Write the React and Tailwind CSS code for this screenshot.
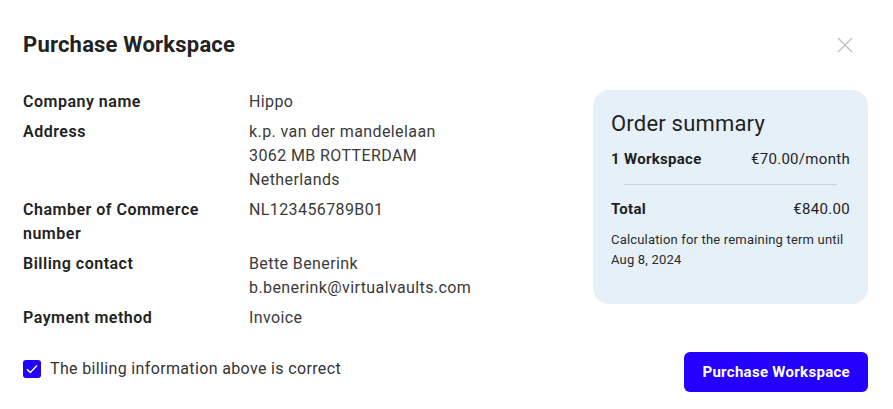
import { useState } from "react";

const rows = [
  { label: "Company name", value: ["Hippo"] },
  { label: "Address", value: ["k.p. van der mandelelaan", "3062 MB ROTTERDAM", "Netherlands"] },
  { label: "Chamber of Commerce number", value: ["NL123456789B01"] },
  { label: "Billing contact", value: ["Bette Benerink", "b.benerink@virtualvaults.com"] },
  { label: "Payment method", value: ["Invoice"] },
];

const OrderSummary = () => (
  <div className="w-[275px] shrink-0 rounded-2xl bg-[#e6f0f8] px-[18px] pt-5 pb-[34px] text-[#1f1f1f]">
    <h3 className="text-[22px] leading-7 font-normal tracking-[0.2px]">Order summary</h3>
    <div className="mt-2.5 flex items-center justify-between text-[15px] leading-[22px] tracking-[0.3px]">
      <span className="font-bold">1 Workspace</span>
      <span>€70.00/month</span>
    </div>
    <div className="mx-[13px] mt-[14px] h-px bg-[#c9d3dc]" />
    <div className="mt-[13px] flex items-center justify-between text-[15px] leading-[22px] tracking-[0.3px]">
      <span className="font-bold">Total</span>
      <span>€840.00</span>
    </div>
    <p className="mt-2.5 text-[13px] leading-5 tracking-[0.18px] text-[#2b2b2b]">
      Calculation for the remaining term until Aug 8, 2024
    </p>
  </div>
);

export default function App() {
  const [checked, setChecked] = useState(true);

  return (
    <div className="w-[893px] h-[409px] bg-white pl-[23px] pr-[25px] pt-[31px] font-['Roboto',sans-serif]">
      <div className="flex items-center justify-between">
        <h2 className="text-[22px] leading-7 font-bold tracking-[0.2px] text-[#222]">Purchase Workspace</h2>
        <button aria-label="Close" className="mr-[15px] text-[#c4c4c4]">
          <svg width="16" height="16" viewBox="0 0 16 16" fill="none" stroke="currentColor" strokeWidth="1.5">
            <path d="M1 1L15 15M15 1L1 15" />
          </svg>
        </button>
      </div>

      <div className="mt-[31px] flex items-start justify-between">
        <dl className="grid grid-cols-[200px_1fr] gap-x-[26px] gap-y-1.5 text-base leading-6">
          {rows.map((r) => (
            <div key={r.label} className="contents">
              <dt className="font-semibold tracking-[0.5px] text-[#222]">{r.label}</dt>
              <dd className="tracking-[0.4px] text-[#3a3a3a]">
                {r.value.map((v) => (
                  <div key={v}>{v}</div>
                ))}
              </dd>
            </div>
          ))}
        </dl>
        <OrderSummary />
      </div>

      <div className="mt-[22px] flex items-center justify-between">
        <label className="mb-[6px] flex items-center gap-[9px] text-base tracking-[0.35px] text-[#333] cursor-pointer">
          <span
            onClick={() => setChecked(!checked)}
            className={`flex h-[18px] w-[18px] items-center justify-center rounded-[3px] ${
              checked ? "bg-[#2400ff]" : "border border-gray-400 bg-white"
            }`}
          >
            {checked && (
              <svg width="12" height="10" viewBox="0 0 12 10" fill="none" stroke="white" strokeWidth="1.5">
                <path d="M1 5.2L4.3 8.5L11 1.5" />
              </svg>
            )}
          </span>
          The billing information above is correct
        </label>
        <button className="h-10 rounded-md bg-[#2400ff] px-[18px] text-[15px] font-bold tracking-[0.3px] text-white">
          Purchase Workspace
        </button>
      </div>
    </div>
  );
}
